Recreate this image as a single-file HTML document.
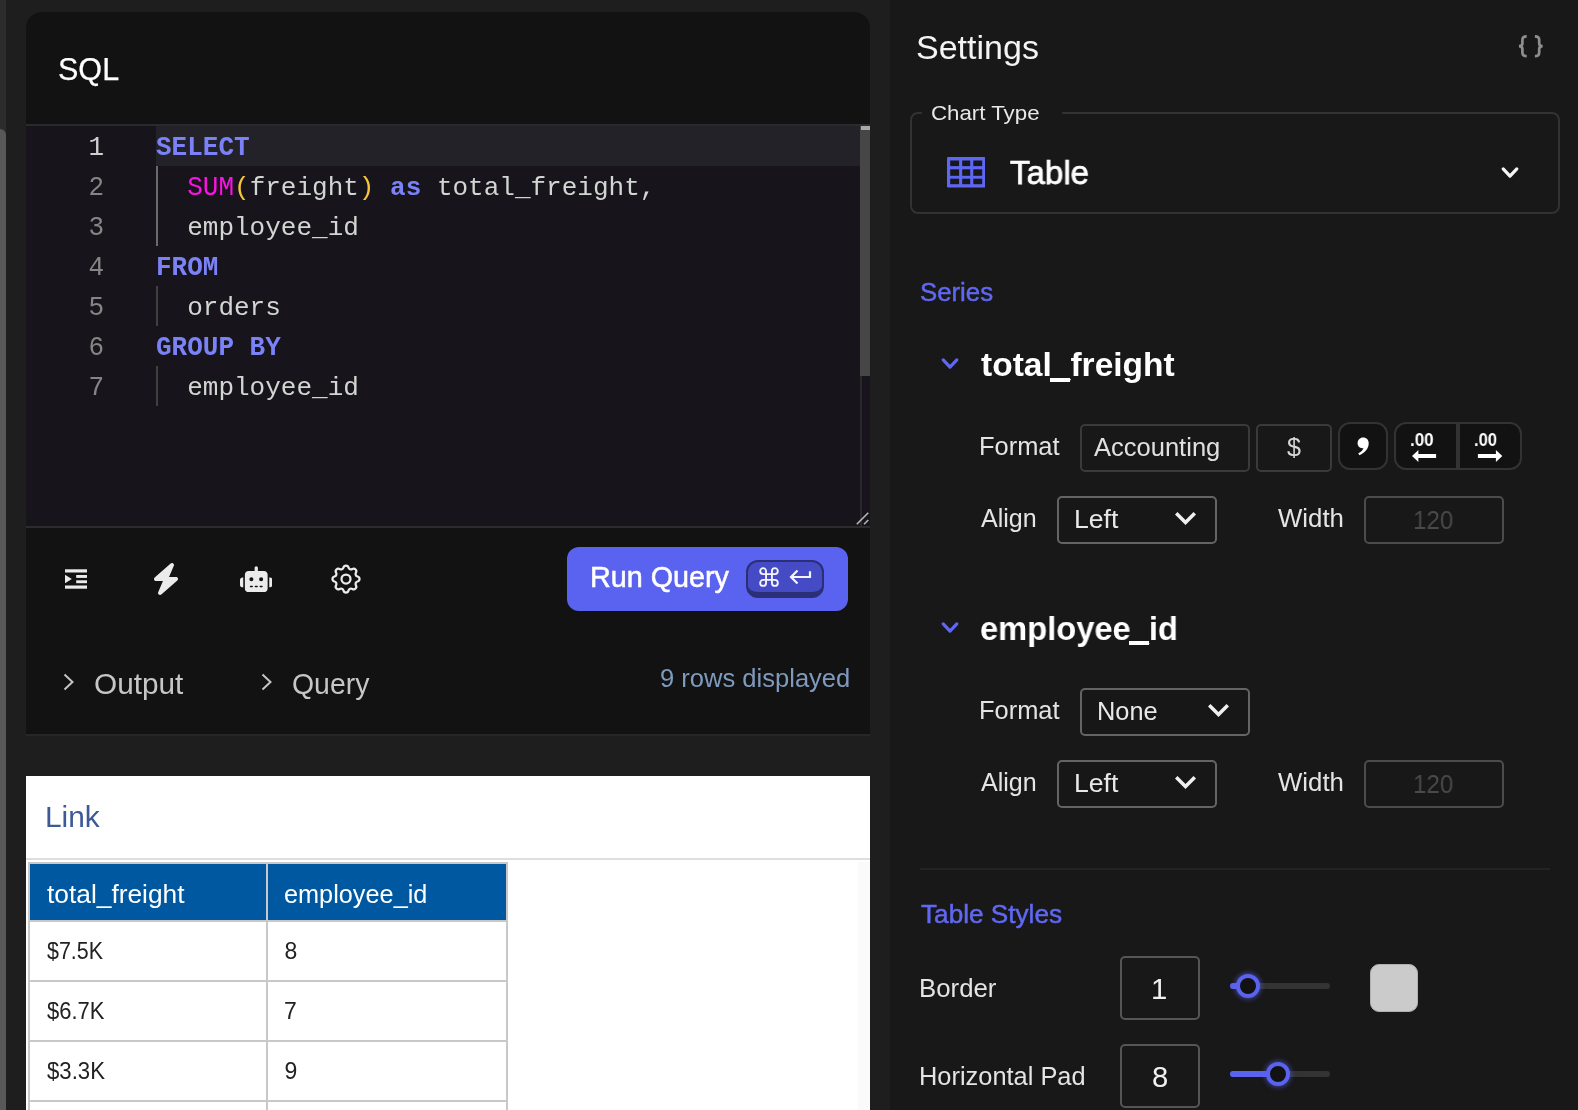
<!DOCTYPE html>
<html>
<head>
<meta charset="utf-8">
<style>
*{box-sizing:border-box;margin:0;padding:0}
html,body{width:1578px;height:1110px;overflow:hidden;background:#1e1e1e}
body{position:relative;font-family:"Liberation Sans",sans-serif;color:#e6e6e6}
.abs{position:absolute}
.t{position:absolute;white-space:nowrap;line-height:1;transform-origin:0 0}
/* left strip */
#strip{left:0;top:0;width:6px;height:1110px;background:#2c2c2c}
#thumb{left:0;top:129px;width:6px;height:990px;background:#585858;border-radius:0 6px 0 0}
/* SQL card */
#card{left:26px;top:12px;width:844px;height:724px;background:#121212;border-radius:16px 16px 0 0;border-bottom:2px solid #262626;overflow:hidden}
#ed{left:0;top:112px;width:844px;height:404px;background:#17151b;border-top:2px solid #2a2a2a;border-bottom:2px solid #2c2c2c}
.mono{font-family:"Liberation Mono",monospace;font-size:26px}
.ln{position:absolute;left:0;width:78px;text-align:right;height:40px;line-height:40px;color:#858585;margin-top:1.6px;transform:scaleY(1.09);transform-origin:0 27.3px}
.cl{position:absolute;left:130px;height:40px;line-height:40px;white-space:pre;color:#d2d6d2;margin-top:1.6px}
.up{display:inline-block;transform:scaleY(1.09);transform-origin:0 27.3px}
.kw{color:#7b82f7;font-weight:bold}
.fn{color:#fc12e4}
.pa{color:#f7c63a}
.guide{position:absolute;left:130px;width:2px;background:#404040}
/* right panel */
#panel{left:890px;top:0;width:688px;height:1110px;background:#181818}
.inp{position:absolute;border:2px solid #3a3a3a;border-radius:5px;background:#181818}
.sel{position:absolute;border:2px solid #646464;border-radius:5px;background:#171717}
body>*{will-change:transform}
</style>
</head>
<body>
<div id="strip" class="abs"></div>
<div id="thumb" class="abs"></div>

<div id="card" class="abs">
  <div class="t" id="t_sql" style="left:32.45px;top:41.10px;font-size:32.00px;font-weight:normal;transform:scaleX(0.9545);-webkit-text-stroke:0.25px #fff;color:#fff">SQL</div>
  <div id="ed" class="abs mono">
    <div class="abs" style="left:130px;top:0;width:714px;height:40px;background:#232228"></div>
    <div class="ln" style="top:0;color:#d0d0d0">1</div>
    <div class="ln" style="top:40px">2</div>
    <div class="ln" style="top:80px">3</div>
    <div class="ln" style="top:120px">4</div>
    <div class="ln" style="top:160px">5</div>
    <div class="ln" style="top:200px">6</div>
    <div class="ln" style="top:240px">7</div>
    <div class="guide" style="top:40px;height:80px;background:#6a6a6a"></div>
    <div class="guide" style="top:160px;height:40px"></div>
    <div class="guide" style="top:240px;height:40px"></div>
    <div class="cl" style="top:0"><span class="kw up">SELECT</span></div>
    <div class="cl" style="top:40px">  <span class="fn up">SUM</span><span class="pa">(</span>freight<span class="pa">)</span> <span class="kw">as</span> total_freight,</div>
    <div class="cl" style="top:80px">  employee_id</div>
    <div class="cl" style="top:120px"><span class="kw up">FROM</span></div>
    <div class="cl" style="top:160px">  orders</div>
    <div class="cl" style="top:200px"><span class="kw up">GROUP BY</span></div>
    <div class="cl" style="top:240px">  employee_id</div>
    <!-- scrollbar -->
    <div class="abs" style="left:834px;top:0;width:10px;height:250px;background:#464646"></div>
    <div class="abs" style="left:835px;top:0;width:9px;height:4px;background:#a8a8a8"></div>
    <div class="abs" style="left:834px;top:250px;width:1.500px;height:150px;background:#29282d"></div>
    <svg class="abs" style="left:826px;top:382px" width="18" height="18" viewBox="0 0 18 18" fill="none" stroke="#b4b4b4" stroke-width="1.6"><path d="M4.800 16.200L16.300 4.700M12 16.200L16.300 12"/></svg>
  </div>

  <!-- toolbar icons -->
  <svg class="abs" style="left:39px;top:557px" width="22" height="20" viewBox="0 0 22 20" fill="#ebebeb">
    <rect x="0" y="0.3" width="22" height="3.2"/><rect x="11.2" y="6" width="10.8" height="2.9"/><rect x="11.2" y="11.3" width="10.8" height="2.9"/><rect x="0" y="16.5" width="22" height="3.2"/><path d="M0 5.8 L6.8 10 L0 14.2z"/>
  </svg>
  <svg class="abs" style="left:126px;top:551px" width="28" height="32" viewBox="0 0 448 512" fill="#ebebeb"><path d="M349.4 44.600c5.900-13.700 1.500-29.700-10.600-38.500s-28.600-8-39.900 1.800l-256 224c-10 8.800-13.600 22.900-8.900 35.300S50.700 288 64 288H175.500L98.600 467.400c-5.900 13.700-1.500 29.700 10.600 38.500s28.600 8 39.900-1.800l256-224c10-8.800 13.600-22.900 8.900-35.300s-16.600-20.700-30-20.700H272.500L349.400 44.600z"/></svg>
  <svg class="abs" style="left:213.7px;top:553.7px" width="32.5" height="26.4" viewBox="0 0 640 512" fill="#ebebeb"><path d="M320 0c17.700 0 32 14.300 32 32V96H472c39.800 0 72 32.200 72 72V440c0 39.800-32.200 72-72 72H168c-39.800 0-72-32.200-72-72V168c0-39.800 32.200-72 72-72H288V32c0-17.700 14.300-32 32-32zM208 384c-8.800 0-16 7.200-16 16s7.200 16 16 16h32c8.800 0 16-7.200 16-16s-7.200-16-16-16H208zm96 0c-8.800 0-16 7.200-16 16s7.200 16 16 16h32c8.800 0 16-7.200 16-16s-7.200-16-16-16H304zm96 0c-8.800 0-16 7.200-16 16s7.200 16 16 16h32c8.800 0 16-7.200 16-16s-7.200-16-16-16H400zM264 256a40 40 0 1 0 -80 0 40 40 0 1 0 80 0zm152 40a40 40 0 1 0 0-80 40 40 0 1 0 0 80zM48 224H64V416H48c-26.500 0-48-21.500-48-48V272c0-26.500 21.500-48 48-48zm544 0c26.500 0 48 21.500 48 48v96c0 26.500-21.500 48-48 48H576V224h16z"/></svg>
  <svg class="abs" style="left:302px;top:549px" width="36" height="36" viewBox="0 0 24 24" fill="none" stroke="#ebebeb" stroke-width="1.5" stroke-linecap="round" stroke-linejoin="round"><path d="M10.325 4.317c.426-1.756 2.924-1.756 3.350 0a1.724 1.724 0 002.573 1.066c1.543-.940 3.310.826 2.370 2.370a1.724 1.724 0 001.065 2.572c1.756.426 1.756 2.924 0 3.350a1.724 1.724 0 00-1.066 2.573c.940 1.543-.826 3.310-2.370 2.370a1.724 1.724 0 00-2.572 1.065c-.426 1.756-2.924 1.756-3.350 0a1.724 1.724 0 00-2.573-1.066c-1.543.940-3.310-.826-2.370-2.370a1.724 1.724 0 00-1.065-2.572c-1.756-.426-1.756-2.924 0-3.350a1.724 1.724 0 001.066-2.573c-.940-1.543.826-3.310 2.370-2.370.996.608 2.296.070 2.572-1.065z"/><circle cx="12" cy="12" r="3"/></svg>
  <!-- run button -->
  <div class="abs" style="left:541px;top:535px;width:281px;height:64px;background:#5a62f0;border-radius:12px"></div>
  <div class="t" id="t_run" style="left:564.04px;top:551.17px;font-size:29.26px;font-weight:normal;transform:scaleX(0.9820);-webkit-text-stroke:0.55px #fff;color:#fff">Run Query</div>
  <div class="abs" style="left:720px;top:548px;width:78px;height:38px;background:#454bc4;border:2px solid #2b2f78;border-bottom-width:6px;border-radius:12px"></div>
  <svg class="abs" style="left:731px;top:553px" width="24" height="24" viewBox="0 0 24 24" fill="none" stroke="#f4f4ff" stroke-width="1.9"><path d="M18 3a3 3 0 0 0-3 3v12a3 3 0 0 0 3 3 3 3 0 0 0 3-3 3 3 0 0 0-3-3H6a3 3 0 0 0-3 3 3 3 0 0 0 3 3 3 3 0 0 0 3-3V6a3 3 0 0 0-3-3 3 3 0 0 0-3 3 3 3 0 0 0 3 3h12a3 3 0 0 0 3-3 3 3 0 0 0-3-3z" transform="translate(12 12) scale(0.98) translate(-12 -12)"/></svg>
  <svg class="abs" style="left:762px;top:556px" width="26" height="18" viewBox="0 0 26 18" fill="none" stroke="#f4f4ff" stroke-width="2.2"><path d="M22 3.300V9H3.500M9.500 2.500L3 9l6.500 6.500"/></svg>
  <!-- output / query -->
  <svg class="abs" style="left:36px;top:660px" width="14" height="20" viewBox="0 0 14 20" fill="none" stroke="#c4c4c4" stroke-width="2"><path d="M2.500 2.500L10.500 10 2.500 17.500"/></svg>
  <div class="t" id="t_output" style="left:67.78px;top:657.87px;font-size:29.26px;font-weight:normal;transform:scaleX(1.0175);color:#c6c6c6">Output</div>
  <svg class="abs" style="left:234px;top:660px" width="14" height="20" viewBox="0 0 14 20" fill="none" stroke="#c4c4c4" stroke-width="2"><path d="M2.500 2.500L10.500 10 2.500 17.500"/></svg>
  <div class="t" id="t_query" style="left:265.53px;top:657.87px;font-size:29.26px;font-weight:normal;transform:scaleX(0.9718);color:#c6c6c6">Query</div>
  <div class="t" id="t_rows" style="left:633.98px;top:654.46px;font-size:25.08px;font-weight:normal;transform:scaleX(1.0187);color:#7f9abd">9 rows displayed</div>
</div>

<div id="out" class="abs" style="left:26px;top:776px;width:844px;height:334px;background:#fff;overflow:hidden">
  <div class="t" id="t_link" style="left:18.86px;top:27.17px;font-size:29.26px;font-weight:normal;transform:scaleX(1.0205);color:#3d5a96">Link</div>
  <div class="abs" style="left:0;top:82px;width:844px;height:2px;background:#dedede"></div>
  <div class="abs" style="left:832px;top:86px;width:12px;height:250px;background:#fafafa"></div>
  <!-- table: outer x 28..508 => local 2..482 -->
  <div class="abs" style="left:2px;top:86px;width:480px;height:260px;background:#c8c8c8"></div>
  <div class="abs" style="left:4px;top:88px;width:236px;height:56px;background:#0059a0"></div>
  <div class="abs" style="left:242px;top:88px;width:238px;height:56px;background:#0059a0"></div>
  <div class="abs" style="left:4px;top:146px;width:236px;height:58px;background:#fff"></div>
  <div class="abs" style="left:242px;top:146px;width:238px;height:58px;background:#fff"></div>
  <div class="abs" style="left:4px;top:206px;width:236px;height:58px;background:#fff"></div>
  <div class="abs" style="left:242px;top:206px;width:238px;height:58px;background:#fff"></div>
  <div class="abs" style="left:4px;top:266px;width:236px;height:58px;background:#fff"></div>
  <div class="abs" style="left:242px;top:266px;width:238px;height:58px;background:#fff"></div>
  <div class="abs" style="left:4px;top:326px;width:236px;height:58px;background:#fff"></div>
  <div class="abs" style="left:242px;top:326px;width:238px;height:58px;background:#fff"></div>
  <div class="t" id="t_h1" style="left:20.90px;top:106.46px;font-size:25.08px;font-weight:normal;transform:scaleX(1.0497);color:#fff">total_freight</div>
  <div class="t" id="t_h2" style="left:258.39px;top:106.46px;font-size:25.08px;font-weight:normal;transform:scaleX(1.0082);color:#fff">employee_id</div>
  <div class="t" id="t_r1a" style="left:21.40px;top:164.30px;font-size:22.99px;font-weight:normal;transform:scaleX(0.9319);color:#222">$7.5K</div>
  <div class="t" id="t_r1b" style="left:258.60px;top:164.30px;font-size:22.99px;font-weight:normal;transform:scaleX(1.0000);color:#222">8</div>
  <div class="t" id="t_r2a" style="left:21.40px;top:224.30px;font-size:22.99px;font-weight:normal;transform:scaleX(0.9566);color:#222">$6.7K</div>
  <div class="t" id="t_r2b" style="left:258.10px;top:224.30px;font-size:22.99px;font-weight:normal;transform:scaleX(1.0000);color:#222">7</div>
  <div class="t" id="t_r3a" style="left:21.40px;top:284.31px;font-size:22.99px;font-weight:normal;transform:scaleX(0.9649);color:#222">$3.3K</div>
  <div class="t" id="t_r3b" style="left:258.60px;top:284.31px;font-size:22.99px;font-weight:normal;transform:scaleX(1.0000);color:#222">9</div>
</div>

<div id="panel" class="abs"></div>
<!-- header -->
<div class="t" id="t_settings" style="left:916.18px;top:30.58px;font-size:33.44px;font-weight:normal;transform:scaleX(1.0180);color:#f4f4f4">Settings</div>
<svg class="abs" style="left:1517px;top:33px" width="28" height="26" viewBox="0 0 28 26" fill="none" stroke="#8e8e8e" stroke-width="2.700"><path d="M9.700 3.300C6.400 3.300 5.400 4.700 5.400 7v3.400c0 1.700-1.100 2.700-3.400 2.800 2.300.1 3.400 1.100 3.400 2.800v3.400c0 2.300 1 3.700 4.300 3.700"/><path d="M17.900 3.300c3.300 0 4.300 1.400 4.300 3.700v3.400c0 1.700 1.100 2.700 3.400 2.800-2.300.1-3.400 1.100-3.400 2.800v3.400c0 2.300-1 3.700-4.300 3.700"/></svg>
<!-- chart type fieldset -->
<div class="abs" style="left:910px;top:112px;width:650px;height:102px;border:2px solid #323232;border-radius:8px"></div>
<div class="abs" style="left:922px;top:108px;width:140px;height:10px;background:#181818"></div>
<div class="t" id="t_charttype" style="left:931.43px;top:103.15px;font-size:20.90px;font-weight:normal;transform:scaleX(1.0660);color:#e8e8e8">Chart Type</div>
<svg class="abs" style="left:946.8px;top:156.6px" width="38.4" height="30.5" viewBox="0 0 38.4 30.5"><rect x="0" y="0" width="38.4" height="30.5" rx="1.2" fill="#5e66f4"/><rect x="3.2" y="3.5" width="8.9" height="5.6" fill="#181818"/><rect x="3.2" y="12.3" width="8.9" height="6.5" fill="#181818"/><rect x="3.2" y="21.7" width="8.9" height="5.5" fill="#181818"/><rect x="15.2" y="3.5" width="8.0" height="5.6" fill="#181818"/><rect x="15.2" y="12.3" width="8.0" height="6.5" fill="#181818"/><rect x="15.2" y="21.7" width="8.0" height="5.5" fill="#181818"/><rect x="26.3" y="3.5" width="8.9" height="5.6" fill="#181818"/><rect x="26.3" y="12.3" width="8.9" height="6.5" fill="#181818"/><rect x="26.3" y="21.7" width="8.9" height="5.5" fill="#181818"/></svg>
<div class="t" id="t_table" style="left:1009.60px;top:156.38px;font-size:33.44px;font-weight:normal;transform:scaleX(0.9885);-webkit-text-stroke:0.75px #fff;color:#fff">Table</div>
<svg class="abs" style="left:1500.0px;top:164.5px" width="20" height="16" viewBox="0 0 20 16" fill="none" stroke="#f6f6f6" stroke-width="3.2" stroke-linecap="round" stroke-linejoin="round"><path d="M3.200 3.900L10 11.100 16.800 3.900"/></svg>
<!-- series -->
<div class="t" id="t_series" style="left:920.37px;top:279.86px;font-size:25.08px;font-weight:normal;transform:scaleX(1.0281);-webkit-text-stroke:0.45px #6068f2;color:#6068f2">Series</div>
<svg class="abs" style="left:939.8px;top:355.9px" width="20" height="16" viewBox="0 0 20 16" fill="none" stroke="#5f67f4" stroke-width="3.2" stroke-linecap="round" stroke-linejoin="round"><path d="M3.200 3.900L10 11.100 16.800 3.900"/></svg>
<div class="t" id="t_tf" style="left:980.90px;top:347.58px;font-size:33.44px;font-weight:bold;transform:scaleX(1.0032);color:#fff">total_freight</div>
<div class="t" id="t_fmt1" style="left:978.97px;top:434.46px;font-size:25.08px;font-weight:normal;transform:scaleX(1.0135);color:#e4e4e4">Format</div>
<div class="inp" style="left:1080px;top:424px;width:170px;height:48px"></div>
<div class="t" id="t_acc" style="left:1093.70px;top:434.96px;font-size:25.08px;font-weight:normal;transform:scaleX(1.0176);color:#e0e0e0">Accounting</div>
<div class="inp" style="left:1256px;top:424px;width:76px;height:48px"></div>
<div class="t" id="t_dollar" style="left:1287.00px;top:434.96px;font-size:25.08px;font-weight:normal;transform:scaleX(1.0000);color:#d8d8d8">$</div>
<div class="abs" style="left:1338px;top:422px;width:50px;height:48px;background:#121212;border:2px solid #333;border-radius:12px"></div>
<svg class="abs" style="left:1356px;top:437px" width="14" height="19" viewBox="0 0 14 19" fill="#fff"><path d="M7.200 0.500c3.300 0 5.500 2.300 5.500 5.800 0 5.200-3.700 9.700-9.300 11.900l-1.100-1.900c2.800-1.300 4.600-3 5.200-5.300-0.400 0.100-0.800 0.200-1.300 0.200-2.600 0-4.600-2.100-4.600-4.900C1.600 3.100 3.900 0.500 7.200 0.500z"/></svg>
<div class="abs" style="left:1394px;top:422px;width:128px;height:48px;background:#121212;border:2px solid #333;border-radius:12px"></div>
<div class="abs" style="left:1456px;top:424px;width:4px;height:44px;background:#333"></div>
<div class="t" id="t_d1" style="left:1410.09px;top:431.25px;font-size:18.70px;font-weight:bold;transform:scaleX(0.9111);color:#fff">.00</div>
<div class="t" id="t_d2" style="left:1474.11px;top:431.25px;font-size:18.70px;font-weight:bold;transform:scaleX(0.8867);color:#fff">.00</div>
<svg class="abs" style="left:1411px;top:449px" width="26" height="14" viewBox="0 0 26 14" fill="#fff"><path d="M1 7L7.400 1.100V5H25.100V9.100H7.400V12.900Z"/></svg>
<svg class="abs" style="left:1477px;top:449px" width="26" height="14" viewBox="0 0 26 14" fill="#fff"><path d="M25.300 7L18.900 1.100V5H0.900V9.100H18.900V12.900Z"/></svg>
<div class="t" id="t_al1" style="left:981.00px;top:506.46px;font-size:25.08px;font-weight:normal;transform:scaleX(0.9924);color:#e4e4e4">Align</div>
<div class="sel" style="left:1057px;top:496px;width:160px;height:48px"></div>
<div class="t" id="t_left1" style="left:1073.88px;top:506.96px;font-size:25.08px;font-weight:normal;transform:scaleX(1.0612);color:#e8e8e8">Left</div>
<svg class="abs" style="left:1174.9px;top:511.9px" width="21" height="13" viewBox="0 0 20.2 12.5" fill="#f0f0f0"><polygon points="0.00,2.37 2.37,0.00 10.10,7.71 17.82,0.00 20.20,2.37 10.10,12.47"/></svg>
<div class="t" id="t_w1" style="left:1278.00px;top:506.46px;font-size:25.08px;font-weight:normal;transform:scaleX(1.0292);color:#e4e4e4">Width</div>
<div class="inp" style="left:1364px;top:496px;width:140px;height:48px;border-color:#4c4c4c"></div>
<div class="t" id="t_120a" style="left:1413.04px;top:508.26px;font-size:25.08px;font-weight:normal;transform:scaleX(0.9600);color:#4a4a4a">120</div>
<div class="abs" style="left:1050.3px;top:377.5px;width:20.3px;height:4.1px;background:#fff"></div>
<div class="abs" style="left:1129px;top:641.2px;width:20.2px;height:4.1px;background:#fff"></div>
<!-- employee_id -->
<svg class="abs" style="left:939.8px;top:619.9px" width="20" height="16" viewBox="0 0 20 16" fill="none" stroke="#5f67f4" stroke-width="3.2" stroke-linecap="round" stroke-linejoin="round"><path d="M3.200 3.900L10 11.100 16.800 3.900"/></svg>
<div class="t" id="t_eid" style="left:980.02px;top:611.58px;font-size:33.44px;font-weight:bold;transform:scaleX(0.9777);color:#fff">employee_id</div>
<div class="t" id="t_fmt2" style="left:978.97px;top:698.46px;font-size:25.08px;font-weight:normal;transform:scaleX(1.0135);color:#e4e4e4">Format</div>
<div class="sel" style="left:1080px;top:688px;width:170px;height:48px"></div>
<div class="t" id="t_none" style="left:1097.28px;top:698.96px;font-size:25.08px;font-weight:normal;transform:scaleX(1.0122);color:#e8e8e8">None</div>
<svg class="abs" style="left:1208.2px;top:703.9px" width="21" height="13" viewBox="0 0 20.2 12.5" fill="#f0f0f0"><polygon points="0.00,2.37 2.37,0.00 10.10,7.71 17.82,0.00 20.20,2.37 10.10,12.47"/></svg>
<div class="t" id="t_al2" style="left:981.00px;top:770.46px;font-size:25.08px;font-weight:normal;transform:scaleX(0.9924);color:#e4e4e4">Align</div>
<div class="sel" style="left:1057px;top:760px;width:160px;height:48px"></div>
<div class="t" id="t_left2" style="left:1073.88px;top:770.96px;font-size:25.08px;font-weight:normal;transform:scaleX(1.0612);color:#e8e8e8">Left</div>
<svg class="abs" style="left:1174.9px;top:775.9px" width="21" height="13" viewBox="0 0 20.2 12.5" fill="#f0f0f0"><polygon points="0.00,2.37 2.37,0.00 10.10,7.71 17.82,0.00 20.20,2.37 10.10,12.47"/></svg>
<div class="t" id="t_w2" style="left:1278.00px;top:770.46px;font-size:25.08px;font-weight:normal;transform:scaleX(1.0292);color:#e4e4e4">Width</div>
<div class="inp" style="left:1364px;top:760px;width:140px;height:48px;border-color:#4c4c4c"></div>
<div class="t" id="t_120b" style="left:1413.04px;top:772.26px;font-size:25.08px;font-weight:normal;transform:scaleX(0.9600);color:#4a4a4a">120</div>
<!-- table styles -->
<div class="abs" style="left:920px;top:868px;width:630px;height:2px;background:#242424"></div>
<div class="t" id="t_ts" style="left:921.40px;top:902.26px;font-size:25.08px;font-weight:normal;transform:scaleX(1.0433);-webkit-text-stroke:0.45px #6068f2;color:#6068f2">Table Styles</div>
<div class="t" id="t_border" style="left:918.94px;top:976.26px;font-size:25.08px;font-weight:normal;transform:scaleX(1.0285);color:#e4e4e4">Border</div>
<div class="inp" style="left:1120px;top:956px;width:80px;height:64px;border-color:#555"></div>
<div class="t" id="t_one" style="left:1151.00px;top:975.17px;font-size:29.26px;font-weight:normal;transform:scaleX(1.0000);color:#f0f0f0">1</div>
<div class="abs" style="left:1230px;top:983px;width:100px;height:6px;border-radius:3px;background:#333"></div>
<div class="abs" style="left:1230px;top:983px;width:18px;height:6px;border-radius:3px;background:#5a62f0"></div>
<div class="abs" style="left:1236px;top:974px;width:24px;height:24px;border-radius:12px;background:#121212;border:4px solid #5a62f0;box-shadow:0 0 5px 1px rgba(90,98,240,.6)"></div>
<div class="abs" style="left:1370px;top:964px;width:48px;height:48px;border-radius:9px;background:#cbcbcb;border:1px solid #b0b0b0"></div>
<div class="t" id="t_hpad" style="left:918.97px;top:1064.26px;font-size:25.08px;font-weight:normal;transform:scaleX(1.0127);color:#e4e4e4">Horizontal Pad</div>
<div class="inp" style="left:1120px;top:1044px;width:80px;height:64px;border-color:#555"></div>
<div class="t" id="t_eight" style="left:1151.85px;top:1063.47px;font-size:29.26px;font-weight:normal;transform:scaleX(1.0000);color:#f0f0f0">8</div>
<div class="abs" style="left:1230px;top:1071px;width:100px;height:6px;border-radius:3px;background:#333"></div>
<div class="abs" style="left:1230px;top:1071px;width:48px;height:6px;border-radius:3px;background:#5a62f0"></div>
<div class="abs" style="left:1266px;top:1062px;width:24px;height:24px;border-radius:12px;background:#121212;border:4px solid #5a62f0;box-shadow:0 0 5px 1px rgba(90,98,240,.6)"></div>
</body>
</html>
